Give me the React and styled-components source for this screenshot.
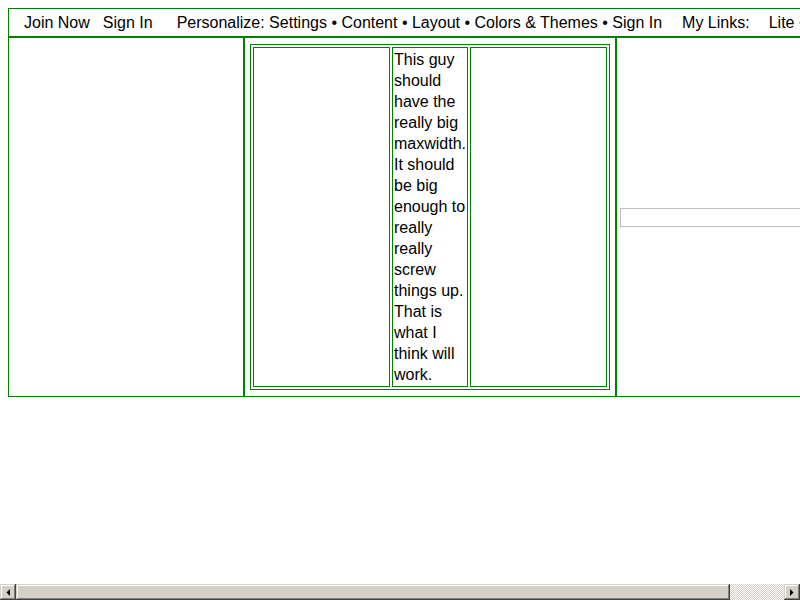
import React from 'react';
import styled, { createGlobalStyle } from 'styled-components';

const green = '#008000';

const GlobalStyle = createGlobalStyle`
  html, body {
    margin: 0;
    overflow: hidden;
  }
  body {
    font-family: "Liberation Sans", Arial, sans-serif;
    font-size: 16px;
    color: #000;
    background: #fff;
  }
`;

const Page = styled.div`
  box-sizing: border-box;
  width: 100vw;
  height: 100vh;
  padding: 8px;
  overflow: hidden;
`;

const Frame = styled.div`
  display: grid;
  grid-template-columns: 234px 374px 242px;
  width: 850px;
  border: 1px solid ${green};
`;

const NavBar = styled.div`
  grid-column: 1 / -1;
  display: flex;
  white-space: nowrap;
  line-height: 21px;
  padding: 3px 0 3px 15px;
  border-bottom: 2px solid ${green};
  overflow: hidden;
`;

const NavItem = styled.span`
  margin-left: ${(p) => p.$gap || 0}px;
`;

const SideColumn = styled.div`
  display: flex;
  align-items: center;
`;

const MiddleColumn = styled.div`
  border-left: 2px solid ${green};
  border-right: 2px solid ${green};
  padding: 6px 5px;
`;

const InnerTable = styled.div`
  display: grid;
  grid-template-columns: 137px 76px 137px;
  gap: 2px;
  padding: 2px;
  border: 1px solid ${green};
`;

const Cell = styled.div`
  box-sizing: border-box;
  border: 1px solid ${green};
  padding: ${(p) => (p.$text ? '1px 0 1px 1px' : '1px')};
  line-height: 21px;
`;

const SearchBox = styled.input`
  box-sizing: border-box;
  width: 236px;
  height: 19px;
  margin: 1px 0 0 3px;
  border: 1px solid #bdbdbd;
  padding: 0 2px;
  font: inherit;
  font-size: 13px;
`;

/* the browser's horizontal scrollbar, drawn over the bottom of the window */
const ScrollBar = styled.div`
  position: fixed;
  left: 0;
  right: 0;
  bottom: 0;
  height: 16px;
  display: flex;
`;

const bevel = `
  box-sizing: border-box;
  background-color: #d4d0c8;
  box-shadow: inset -1px -1px #404040, inset 1px 1px #d4d0c8,
    inset -2px -2px #808080, inset 2px 2px #ffffff;
`;

const ScrollButton = styled.div`
  ${bevel}
  width: 16px;
  flex: none;
  display: flex;
  align-items: center;
  justify-content: center;
`;

const ScrollTrack = styled.div`
  flex: 1;
  display: flex;
  background: repeating-conic-gradient(#d4d0c8 0 25%, #ffffff 0 50%) 0 0 / 2px 2px;
`;

const ScrollThumb = styled.div`
  ${bevel}
  width: ${(p) => p.$size}px;
`;

const Arrow = ({ dir }) => (
  <svg width="4" height="7" viewBox="0 0 4 7">
    {dir === 'left' ? <path d="M4 0V7L0.5 3.5Z" fill="#000" /> : <path d="M0 0V7L3.5 3.5Z" fill="#000" />}
  </svg>
);

export default function App() {
  return (
    <>
      <GlobalStyle />
      <Page>
        <Frame>
          <NavBar>
            <NavItem>Join Now</NavItem>
            <NavItem $gap={13}>Sign In</NavItem>
            <NavItem $gap={24}>
              Personalize: Settings • Content • Layout • Colors &amp; Themes • Sign In
            </NavItem>
            <NavItem $gap={20}>My Links:</NavItem>
            <NavItem $gap={19}>Lite • Full</NavItem>
          </NavBar>
          <SideColumn />
          <MiddleColumn>
            <InnerTable>
              <Cell />
              <Cell $text>
                This guy should have the really big maxwidth. It should be big enough to really
                really screw things up. That is what I think will work.
              </Cell>
              <Cell />
            </InnerTable>
          </MiddleColumn>
          <SideColumn>
            <SearchBox type="text" />
          </SideColumn>
        </Frame>
      </Page>
      <ScrollBar>
        <ScrollButton>
          <Arrow dir="left" />
        </ScrollButton>
        <ScrollTrack>
          <ScrollThumb $size={714} />
        </ScrollTrack>
        <ScrollButton>
          <Arrow dir="right" />
        </ScrollButton>
      </ScrollBar>
    </>
  );
}
